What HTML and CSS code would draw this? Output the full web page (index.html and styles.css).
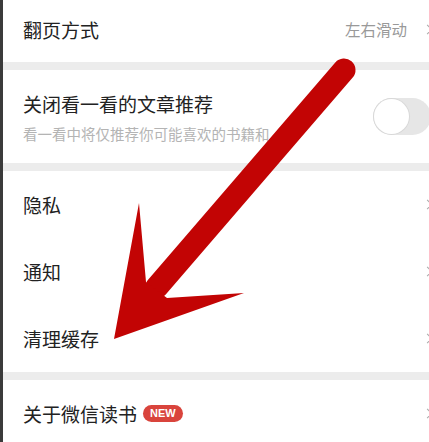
FILE: index.html
```html
<!DOCTYPE html>
<html lang="zh-CN">
<head>
    <meta charset="UTF-8">
    <meta name="viewport" content="width=device-width, initial-scale=1.0">
    <title>设置</title>
    <link rel="stylesheet" href="styles.css">
</head>
<body>
    <div class="screen">
        <div class="group">
            <div class="row row-first">
                <span class="title">翻页方式</span>
                <span class="value">左右滑动</span>
                <span class="chevron"></span>
            </div>
        </div>

        <div class="group">
            <div class="row row-switch">
                <div class="text-block">
                    <span class="title">关闭看一看的文章推荐</span>
                    <span class="desc">看一看中将仅推荐你可能喜欢的书籍和</span>
                </div>
                <div class="switch"><div class="knob"></div></div>
            </div>
        </div>

        <div class="group">
            <div class="row">
                <span class="title">隐私</span>
                <span class="chevron"></span>
            </div>
            <div class="row">
                <span class="title">通知</span>
                <span class="chevron"></span>
            </div>
            <div class="row">
                <span class="title">清理缓存</span>
                <span class="chevron"></span>
            </div>
        </div>

        <div class="group">
            <div class="row">
                <span class="title">关于微信读书 <span class="badge">NEW</span></span>
                <span class="chevron"></span>
            </div>
        </div>

        <!-- red annotation arrow drawn over the list -->
        <svg class="arrow" width="429" height="442" viewBox="0 0 429 442">
            <line x1="344" y1="70" x2="157" y2="287" stroke="#c20404" stroke-width="23" stroke-linecap="round"/>
            <polygon points="114,339 139,203 146,282 167,298 244,293" fill="#c20404"/>
        </svg>
    </div>
</body>
</html>
```

FILE: styles.css
```css
:root {
    --text-color: #222;
    --sub-color: #b4b4b4;
    --divider: #ececec;
}

* {
    margin: 0;
    padding: 0;
    box-sizing: border-box;
}

body {
    background: #fff;
    font-family: "Noto Sans CJK SC", "Noto Sans", sans-serif;
    color: var(--text-color);
    overflow: hidden;
    width: 429px;
    height: 442px;
}

.screen {
    position: relative;
    width: 440px;
    border-left: 3px solid #3b3b3b;
    background: #fff;
}

.group {
    border-bottom: 8px solid var(--divider);
}

.row {
    display: flex;
    align-items: center;
    height: 67px;
    padding: 0 9px 0 20px;
}

.row-first {
    height: 62px;
    padding-bottom: 4px;
}

.row-switch {
    height: 93px;
}

.title {
    font-size: 19px;
    flex: 1;
    display: flex;
    align-items: center;
    gap: 6px;
}

.value {
    font-size: 15.5px;
    color: #999;
    margin-right: 17px;
}

.chevron {
    width: 7px;
    height: 7px;
    border-top: 1.5px solid #aaa;
    border-right: 1.5px solid #aaa;
    transform: rotate(45deg);
}

.text-block {
    flex: 1;
    display: flex;
    flex-direction: column;
    gap: 6px;
    overflow: hidden;
}

.desc {
    font-size: 14.5px;
    color: var(--sub-color);
    white-space: nowrap;
}

.switch {
    width: 58px;
    height: 37px;
    border-radius: 19px;
    background: #e6e6e6;
    padding: 1px;
    flex-shrink: 0;
}

.knob {
    width: 35px;
    height: 35px;
    border-radius: 50%;
    background: #fff;
    box-shadow: 0 0 0 1px #d8d8d8;
}

.badge {
    background: #d9443c;
    color: #fff;
    font-family: "Liberation Sans", Arial, sans-serif;
    font-weight: bold;
    font-size: 11px;
    line-height: 17px;
    padding: 0 7px;
    border-radius: 9px;
}

.arrow {
    position: absolute;
    left: -3px;
    top: 0;
}
```
